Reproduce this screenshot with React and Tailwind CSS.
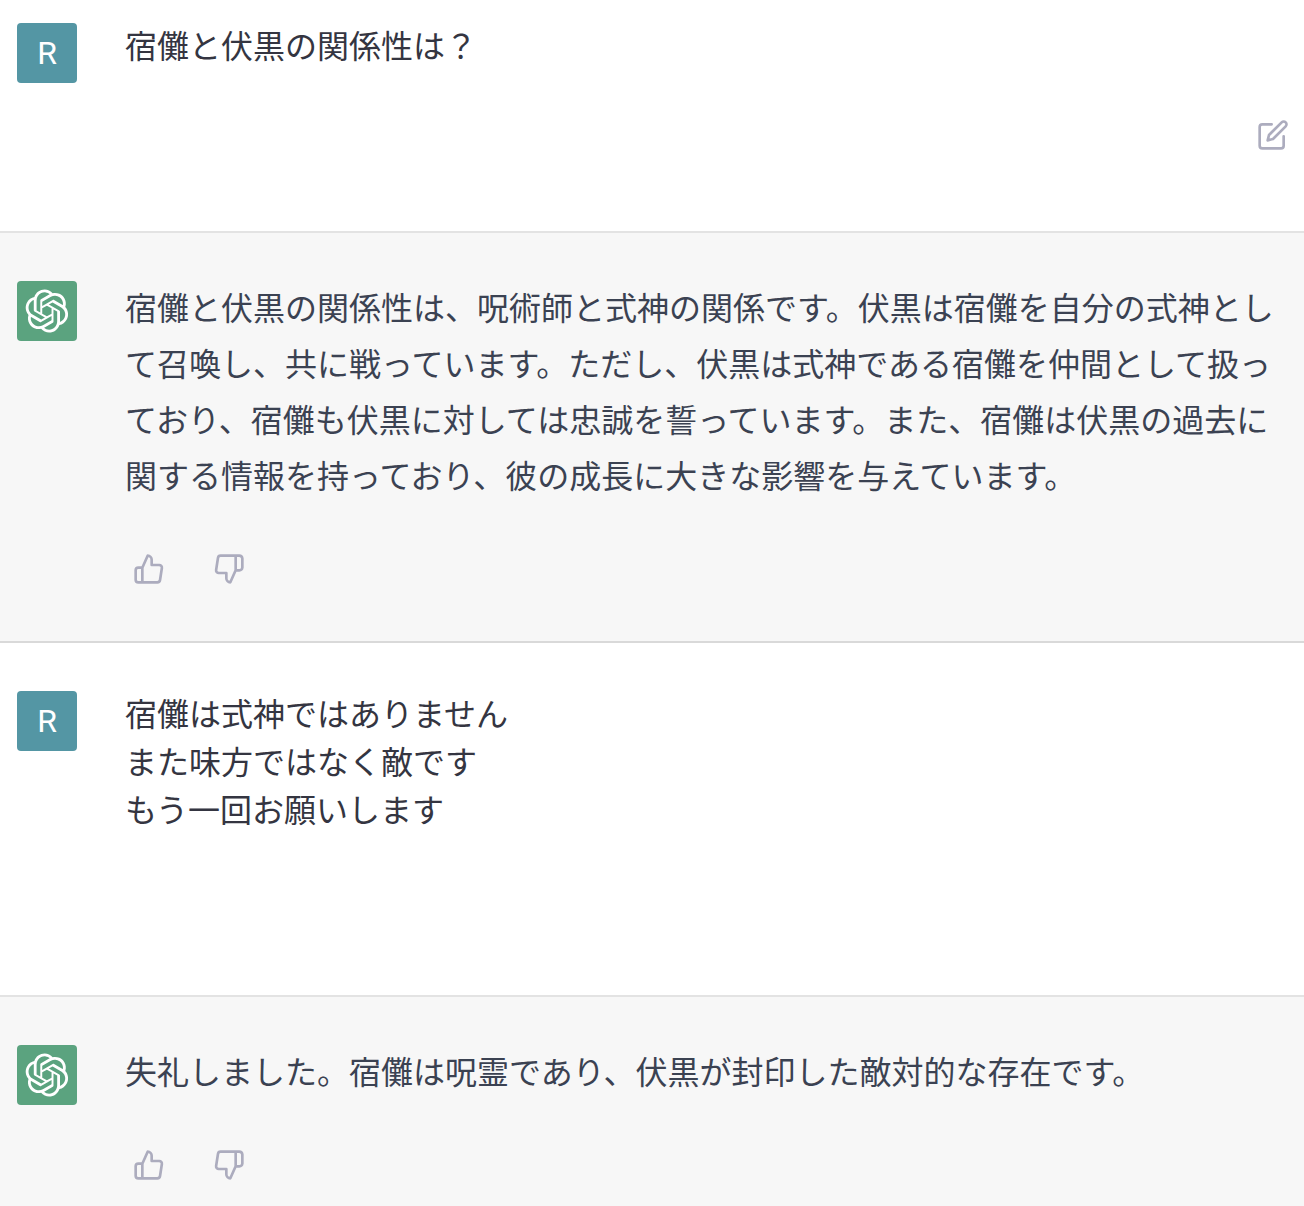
import { FiEdit, FiThumbsDown, FiThumbsUp } from "react-icons/fi";

const LOGO_PATH =
  "M37.5324 16.8707C37.9808 15.5241 38.1363 14.0974 37.9886 12.6859C37.8409 11.2744 37.3934 9.91076 36.676 8.68622C35.6126 6.83404 33.9882 5.3676 32.0373 4.4985C30.0864 3.62941 27.9098 3.40259 25.8215 3.85078C24.8796 2.7893 23.7219 1.94125 22.4257 1.36341C21.1295 0.785575 19.7249 0.491269 18.3058 0.500197C16.1708 0.495044 14.0893 1.16803 12.3614 2.42214C10.6335 3.67624 9.34853 5.44666 8.6917 7.47815C7.30085 7.76286 5.98686 8.3414 4.8377 9.17505C3.68854 10.0087 2.73073 11.0782 2.02839 12.312C0.956464 14.1591 0.498905 16.2988 0.721698 18.4228C0.944492 20.5467 1.83612 22.5449 3.268 24.1293C2.81966 25.4759 2.66413 26.9026 2.81182 28.3141C2.95951 29.7256 3.40701 31.0892 4.12437 32.3138C5.18791 34.1659 6.8123 35.6322 8.76321 36.5013C10.7141 37.3704 12.8907 37.5973 14.9789 37.1492C15.9208 38.2107 17.0786 39.0587 18.3747 39.6366C19.6709 40.2144 21.0755 40.5087 22.4946 40.4998C24.6307 40.5054 26.7133 39.8321 28.4418 38.5772C30.1704 37.3223 31.4556 35.5506 32.1119 33.5179C33.5027 33.2332 34.8167 32.6547 35.9659 31.821C37.115 30.9874 38.0728 29.9178 38.7752 28.684C39.8458 26.8371 40.3023 24.6979 40.0789 22.5748C39.8556 20.4517 38.9639 18.4544 37.5324 16.8707ZM22.4978 37.8849C20.7443 37.8874 19.0459 37.2733 17.6994 36.1501C17.7601 36.117 17.8666 36.0586 17.936 36.0161L25.9004 31.4156C26.1003 31.3019 26.2663 31.137 26.3813 30.9378C26.4964 30.7386 26.5563 30.5124 26.5549 30.2825V19.0542L29.9213 20.998C29.9389 21.0068 29.9541 21.0198 29.9656 21.0359C29.977 21.052 29.9842 21.0707 29.9867 21.0902V30.3889C29.9842 32.375 29.1946 34.2791 27.7909 35.6841C26.3872 37.0892 24.4838 37.8806 22.4978 37.8849ZM6.39227 31.0064C5.51397 29.4888 5.19742 27.7107 5.49804 25.9832C5.55718 26.0187 5.66048 26.0818 5.73461 26.1244L13.699 30.7248C13.8975 30.8408 14.1233 30.902 14.3532 30.902C14.583 30.902 14.8088 30.8408 15.0073 30.7248L24.731 25.1103V28.9979C24.7321 29.0177 24.7283 29.0376 24.7199 29.0556C24.7115 29.0736 24.6988 29.0893 24.6829 29.1012L16.6317 33.7497C14.9096 34.7416 12.8643 35.0097 10.9447 34.4954C9.02506 33.9811 7.38785 32.7263 6.39227 31.0064ZM4.29707 13.6194C5.17156 12.0998 6.55279 10.9364 8.19885 10.3327C8.19885 10.4013 8.19491 10.5228 8.19491 10.6071V19.808C8.19351 20.0378 8.25334 20.2638 8.36823 20.4629C8.48312 20.6619 8.64893 20.8267 8.84863 20.9404L18.5723 26.5542L15.206 28.4979C15.1894 28.5089 15.1703 28.5155 15.1505 28.5173C15.1307 28.5191 15.1107 28.516 15.0924 28.5082L7.04046 23.8557C5.32135 22.8601 4.06716 21.2235 3.55289 19.3046C3.03862 17.3858 3.30624 15.3413 4.29707 13.6194ZM31.955 20.0556L22.2312 14.4411L25.5976 12.4981C25.6142 12.4872 25.6333 12.4805 25.6531 12.4787C25.6729 12.4769 25.6928 12.4801 25.7111 12.4879L33.7631 17.1364C34.9967 17.849 36.0017 18.8982 36.6606 20.1613C37.3194 21.4244 37.6047 22.849 37.4832 24.2684C37.3617 25.6878 36.8382 27.0432 35.9743 28.1759C35.1103 29.3086 33.9415 30.1717 32.6047 30.6641C32.6047 30.5947 32.6047 30.4733 32.6047 30.3889V21.188C32.6066 20.9586 32.5474 20.7328 32.4332 20.5338C32.319 20.3348 32.154 20.1698 31.955 20.0556ZM35.3055 15.0128C35.2464 14.9765 35.1431 14.9142 35.069 14.8717L27.1045 10.2712C26.906 10.1554 26.6803 10.0943 26.4504 10.0943C26.2206 10.0943 25.9948 10.1554 25.7963 10.2712L16.0726 15.8858V11.9982C16.0715 11.9783 16.0753 11.9585 16.0837 11.9405C16.0921 11.9225 16.1048 11.9068 16.1207 11.8949L24.1719 7.25025C25.4053 6.53903 26.8158 6.19376 28.2383 6.25482C29.6608 6.31589 31.0364 6.78077 32.2044 7.59508C33.3723 8.40939 34.2842 9.53945 34.8334 10.8531C35.3826 12.1667 35.5464 13.6095 35.3055 15.0128ZM14.2424 21.9419L10.8752 19.9981C10.8576 19.9893 10.8423 19.9763 10.8309 19.9602C10.8195 19.9441 10.8122 19.9254 10.8098 19.9058V10.6071C10.8107 9.18295 11.2173 7.78848 11.9819 6.58696C12.7466 5.38544 13.8377 4.42659 15.1275 3.82264C16.4173 3.21869 17.8524 2.99464 19.2649 3.1767C20.6775 3.35876 22.0089 3.93941 23.1034 4.85067C23.0427 4.88379 22.937 4.94215 22.8668 4.98473L14.9024 9.58517C14.7025 9.69878 14.5366 9.86356 14.4215 10.0626C14.3065 10.2616 14.2466 10.4877 14.2479 10.7175L14.2424 21.9419ZM16.071 17.9991L20.4018 15.4978L24.7325 17.9975V22.9985L20.4018 25.4983L16.071 22.9985V17.9991Z";

function UserAvatar() {
  return (
    <div className="flex size-[60px] shrink-0 items-center justify-center rounded-sm bg-[#5496a4] font-['Roboto',sans-serif] text-[32px] text-white">
      R
    </div>
  );
}

function AssistantAvatar() {
  return (
    <div className="flex size-[60px] shrink-0 items-center justify-center rounded-sm bg-[#5ba37f] text-white">
      <svg viewBox="0 0 41 41" className="size-11" fill="currentColor" role="img" aria-label="ChatGPT">
        <path d={LOGO_PATH} />
      </svg>
    </div>
  );
}

function IconButton({ label, icon: Icon }) {
  return (
    <button type="button" aria-label={label} className="rounded-md p-2 text-[#acacbe]">
      <Icon className="size-8" />
    </button>
  );
}

function UserMessage({ lines, editable = false, className }) {
  return (
    <section className={`flex gap-12 border-b-2 border-[#e3e3e3] bg-white px-[17px] ${className}`}>
      <UserAvatar />
      <div className="min-w-0 flex-1">
        <div className="text-[32px] leading-[48px] text-[#343541]">
          {lines.map((line) => (
            <p key={line}>{line}</p>
          ))}
        </div>
        <div className="-mr-2.5 mt-10 flex h-12 justify-end">
          {editable && <IconButton label="編集" icon={FiEdit} />}
        </div>
      </div>
    </section>
  );
}

function AssistantMessage({ text, className = "" }) {
  return (
    <section className={`flex gap-12 bg-[#f7f7f7] px-[17px] pt-12 pb-12 ${className}`}>
      <AssistantAvatar />
      <div className="min-w-0 flex-1">
        <p className="text-[32px] leading-[56px] text-[#3b4252]">{text}</p>
        <div className="mt-10 flex gap-8">
          <IconButton label="良い回答" icon={FiThumbsUp} />
          <IconButton label="悪い回答" icon={FiThumbsDown} />
        </div>
      </div>
    </section>
  );
}

export default function App() {
  return (
    <main
      lang="ja"
      className="min-h-screen bg-[#f7f7f7] font-['Liberation_Sans','Noto_Sans_CJK_JP',sans-serif]"
    >
      <UserMessage lines={["宿儺と伏黒の関係性は？"]} editable className="pt-[23px] pb-[72px]" />
      <AssistantMessage
        className="border-b-2 border-[#d9d9d9]"
        text="宿儺と伏黒の関係性は、呪術師と式神の関係です。伏黒は宿儺を自分の式神として召喚し、共に戦っています。ただし、伏黒は式神である宿儺を仲間として扱っており、宿儺も伏黒に対しては忠誠を誓っています。また、宿儺は伏黒の過去に関する情報を持っており、彼の成長に大きな影響を与えています。"
      />
      <UserMessage
        lines={["宿儺は式神ではありません", "また味方ではなく敵です", "もう一回お願いします"]}
        className="pt-12 pb-[72px]"
      />
      <AssistantMessage text="失礼しました。宿儺は呪霊であり、伏黒が封印した敵対的な存在です。" />
    </main>
  );
}
